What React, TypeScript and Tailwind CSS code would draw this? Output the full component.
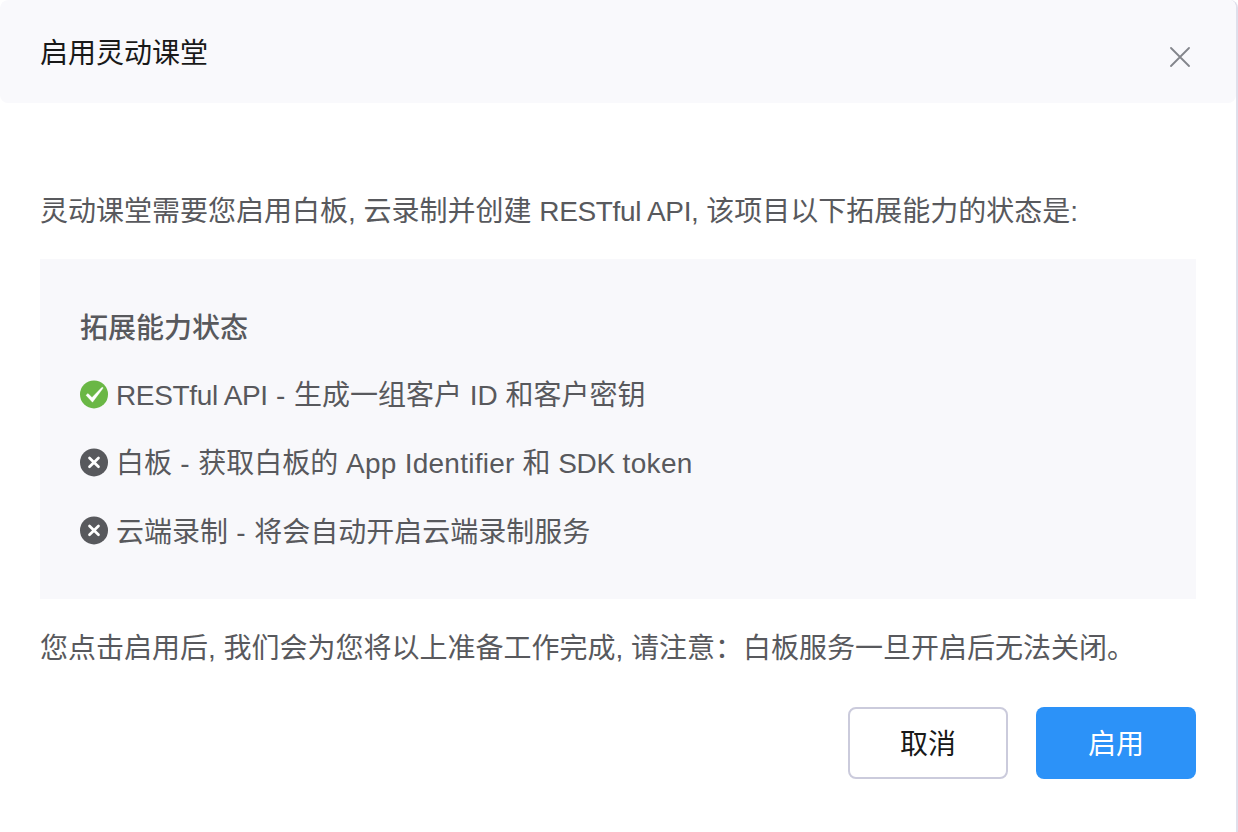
import React from "react";

function Tight({ children }: { children: React.ReactNode }) {
  return <span className="tracking-[-0.35px]">{children}</span>;
}

function Loose({ children }: { children: React.ReactNode }) {
  return <span className="tracking-[0.26px]">{children}</span>;
}

function Dash() {
  return <span className="tracking-[0.45px]"> - </span>;
}

type Ability = { id: string; content: React.ReactNode; enabled: boolean; offset: string };

const abilities: Ability[] = [
  {
    id: "restful",
    content: (
      <>
        <Tight>RESTful API</Tight>
        <Dash />
        生成一组客户 ID 和客户密钥
      </>
    ),
    enabled: true,
    offset: "pt-px",
  },
  {
    id: "whiteboard",
    content: (
      <>
        白板
        <Dash />
        获取白板的 <Loose>App Identifier</Loose> 和 <Tight>SDK</Tight> <span className="tracking-[0.35px]">token</span>
      </>
    ),
    enabled: false,
    offset: "pt-px",
  },
  {
    id: "recording",
    content: (
      <>
        云端录制
        <Dash />
        将会自动开启云端录制服务
      </>
    ),
    enabled: false,
    offset: "pt-0.5",
  },
];

function CloseIcon() {
  return (
    <svg width="20" height="20" viewBox="0 0 20 20" fill="none" stroke="#83858b" strokeWidth="1.8" strokeLinecap="round">
      <path d="M1 1 19 19M19 1 1 19" />
    </svg>
  );
}

function StatusIcon({ enabled }: { enabled: boolean }) {
  return (
    <svg className="mt-[7px] shrink-0" width="28" height="29" viewBox="0 0 28 29">
      <g transform="translate(0 .4)">
        <circle cx="14" cy="14" r="14" fill={enabled ? "#6ab745" : "#58595d"} />
        {enabled ? (
          <path d="M6 14.8 8 13.2 12 17.2 21.5 7.3 22.9 6.9 22.8 8.1 12.5 21.8Z" fill="#fff" stroke="#fff" strokeWidth="0.4" strokeLinejoin="round" />
        ) : (
          <path d="M9.5 9.6 18.5 18.4M18.5 9.6 9.5 18.4" stroke="#fff" strokeWidth="2.7" strokeLinecap="round" />
        )}
      </g>
    </svg>
  );
}

export default function App() {
  return (
    <div className="h-[832px] w-[1238px] overflow-hidden rounded-t-lg border-r-2 border-[#dfdfeb] bg-white font-['Liberation_Sans','Noto_Sans_CJK_SC',sans-serif] text-[28px] leading-[44px] text-[#58595d]">
      <header className="flex h-[103px] items-start justify-between rounded-lg bg-[#f9f9fc] pl-10 pr-[46px] text-[#191919]">
        <h1 className="pt-8">启用灵动课堂</h1>
        <button className="mt-[47px]" aria-label="关闭">
          <CloseIcon />
        </button>
      </header>
      <main className="pl-10 pr-10 pt-[87px]">
        <p className="whitespace-nowrap">
          灵动课堂需要您启用白板, 云录制并创建 <Tight>RESTful API,</Tight> 该项目以下拓展能力的状态是:
        </p>
        <section className="mt-[25px] h-[340px] bg-[#f8f8fb] px-10 pt-12">
          <h2 className="font-medium">拓展能力状态</h2>
          <ul className="mt-[22px] flex flex-col">
            {abilities.map((a) => (
              <li key={a.id} className="flex h-[68px] items-start gap-2 whitespace-nowrap">
                <StatusIcon enabled={a.enabled} />
                <div className={a.offset}>{a.content}</div>
              </li>
            ))}
          </ul>
        </section>
        <p className="mt-7 whitespace-nowrap">您点击启用后, 我们会为您将以上准备工作完成, 请注意：白板服务一旦开启后无法关闭。</p>
        <div className="mt-9 flex justify-end gap-7">
          <button className="h-[72px] w-40 rounded-lg border-2 border-[#cbcbdc] bg-white pt-[3px] text-[#191919]">取消</button>
          <button className="h-[72px] w-40 rounded-lg bg-[#2c92f8] pt-[3px] text-white">启用</button>
        </div>
      </main>
    </div>
  );
}
